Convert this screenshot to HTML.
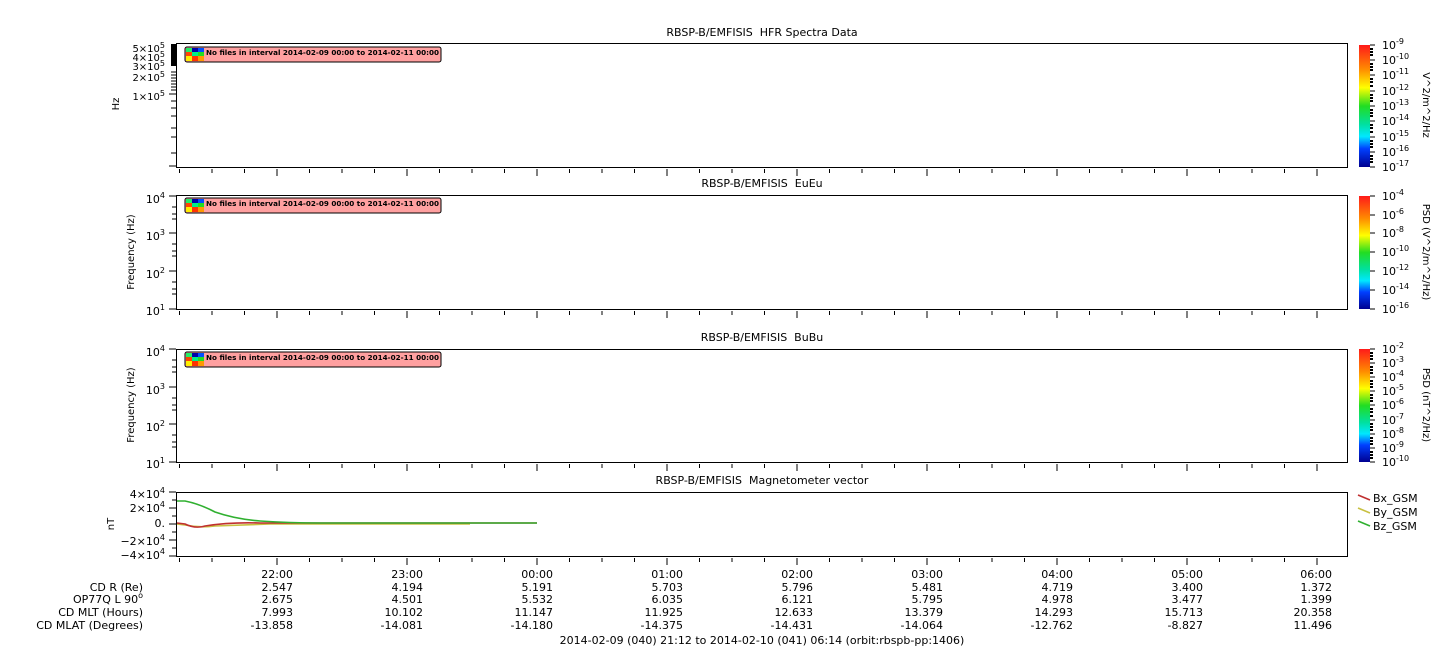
<!DOCTYPE html>
<html><head><meta charset="utf-8"><style>
html,body{margin:0;padding:0;background:#fff}
svg{display:block;font-family:"DejaVu Sans","Liberation Sans",sans-serif}
text{fill:#000;white-space:pre}
</style></head><body>
<svg width="1447" height="658" viewBox="0 0 1447 658" xmlns="http://www.w3.org/2000/svg">
<defs>
<linearGradient id="cb" x1="0" y1="0" x2="0" y2="1">
<stop offset="0" stop-color="#ff1a1a"/><stop offset="0.2" stop-color="#ff8c00"/><stop offset="0.35" stop-color="#ffff00"/><stop offset="0.5" stop-color="#22dd22"/><stop offset="0.65" stop-color="#00e0a0"/><stop offset="0.75" stop-color="#00e8ff"/><stop offset="0.85" stop-color="#0040ff"/><stop offset="1" stop-color="#000090"/>
</linearGradient>
<path id="tk" stroke="#000" fill="none" d="M179.5 2v4M212 2v4M244.5 2v4M277 2v7M309.5 2v4M342 2v4M374.5 2v4M407 2v7M439.5 2v4M472 2v4M504.5 2v4M537 2v7M569.5 2v4M602 2v4M634.5 2v4M667 2v7M699.5 2v4M732 2v4M764.5 2v4M797 2v7M829.5 2v4M862 2v4M894.5 2v4M927 2v7M959.5 2v4M992 2v4M1024.5 2v4M1057 2v7M1089.5 2v4M1122 2v4M1154.5 2v4M1187 2v7M1219.5 2v4M1252 2v4M1284.5 2v4M1317 2v7"/>
<g id="nf">
<rect x="185" y="0" width="256" height="15" rx="2" fill="#ffa0a0" stroke="#000"/>
<rect x="186" y="1" width="6" height="4" fill="#22ee66"/><rect x="192" y="1" width="6" height="4" fill="#0000aa"/><rect x="198" y="1" width="6" height="4" fill="#0050ff"/>
<rect x="186" y="5" width="6" height="4" fill="#ff4400"/><rect x="192" y="5" width="6" height="4" fill="#00ee88"/><rect x="198" y="5" width="6" height="4" fill="#22dd22"/>
<rect x="186" y="9" width="6" height="5" fill="#ffee00"/><rect x="192" y="9" width="6" height="5" fill="#ff3300"/><rect x="198" y="9" width="6" height="5" fill="#ff9900"/>
<text x="206" y="8" font-size="7" font-weight="bold" textLength="233" lengthAdjust="spacingAndGlyphs">No files in interval 2014-02-09 00:00 to 2014-02-11 00:00</text>
</g>
</defs>

<g font-size="11" text-anchor="middle">
<text x="762" y="36">RBSP-B/EMFISIS  HFR Spectra Data</text>
<text x="762" y="187">RBSP-B/EMFISIS  EuEu</text>
<text x="762" y="341">RBSP-B/EMFISIS  BuBu</text>
<text x="762" y="484">RBSP-B/EMFISIS  Magnetometer vector</text>
</g>

<g fill="none" stroke="#000">
<rect x="176.5" y="43.5" width="1171" height="124"/>
<rect x="176.5" y="195.5" width="1171" height="114"/>
<rect x="176.5" y="349.5" width="1171" height="113"/>
<rect x="176.5" y="492.5" width="1171" height="64"/>
</g>
<use href="#tk" transform="translate(0,167)"/>
<use href="#tk" transform="translate(0,309)"/>
<use href="#tk" transform="translate(0,462)"/>
<use href="#tk" transform="translate(0,556)"/>

<rect x="171" y="44" width="5" height="22" fill="#000"/>
<path stroke="#000" fill="none" d="M171 72h5M171 75h5M171 78h5M171 81h5M171 84h5M171 87h5M171 90h5M169 94h7M171 101h5M171 108h5M171 116h5M171 128h5M171 137h5M171 153h5M169 166h7"/>
<g font-size="10" text-anchor="end">
<text x="165" y="52">5×10<tspan font-size="8" dy="-4">5</tspan></text>
<text x="165" y="61">4×10<tspan font-size="8" dy="-4">5</tspan></text>
<text x="165" y="70">3×10<tspan font-size="8" dy="-4">5</tspan></text>
<text x="165" y="81">2×10<tspan font-size="8" dy="-4">5</tspan></text>
<text x="165" y="100">1×10<tspan font-size="8" dy="-4">5</tspan></text>
</g>
<text font-size="10" transform="translate(119,104) rotate(-90)" text-anchor="middle">Hz</text>
<use href="#nf" transform="translate(0,47)"/>

<path stroke="#000" fill="none" d="M169 196h7M169 233h7M169 271h7M169 309h7M172 207h4M172 214h4M172 219h4M172 244h4M172 251h4M172 256h4M172 282h4M172 289h4M172 294h4"/>
<g font-size="11" text-anchor="end">
<text x="165" y="203">10<tspan font-size="8" dy="-5">4</tspan></text>
<text x="165" y="240">10<tspan font-size="8" dy="-5">3</tspan></text>
<text x="165" y="278">10<tspan font-size="8" dy="-5">2</tspan></text>
<text x="165" y="315">10<tspan font-size="8" dy="-5">1</tspan></text>
</g>
<text font-size="10" transform="translate(134,252) rotate(-90)" text-anchor="middle">Frequency (Hz)</text>
<use href="#nf" transform="translate(0,198)"/>

<path stroke="#000" fill="none" d="M169 349h7M169 387h7M169 424h7M169 462h7M172 360h4M172 367h4M172 372h4M172 398h4M172 405h4M172 410h4M172 435h4M172 442h4M172 447h4"/>
<g font-size="11" text-anchor="end">
<text x="165" y="356">10<tspan font-size="8" dy="-5">4</tspan></text>
<text x="165" y="394">10<tspan font-size="8" dy="-5">3</tspan></text>
<text x="165" y="431">10<tspan font-size="8" dy="-5">2</tspan></text>
<text x="165" y="468">10<tspan font-size="8" dy="-5">1</tspan></text>
</g>
<text font-size="10" transform="translate(134,405) rotate(-90)" text-anchor="middle">Frequency (Hz)</text>
<use href="#nf" transform="translate(0,352)"/>

<path stroke="#000" fill="none" d="M169 492h7M169 508h7M169 524h7M169 540h7M169 556h7M172 500h4M172 516h4M172 532h4M172 548h4"/>
<g font-size="11" text-anchor="end">
<text x="165" y="498">4×10<tspan font-size="8" dy="-5">4</tspan></text>
<text x="165" y="512">2×10<tspan font-size="8" dy="-5">4</tspan></text>
<text x="165" y="527">0.</text>
<text x="165" y="545">−2×10<tspan font-size="8" dy="-5">4</tspan></text>
<text x="165" y="559">−4×10<tspan font-size="8" dy="-5">4</tspan></text>
</g>
<text font-size="10" transform="translate(114,524) rotate(-90)" text-anchor="middle">nT</text>
<g fill="none" stroke-width="1.6">
<path stroke="#c8c040" d="M177 524 L185 525 Q200 528 215 526 Q240 525 270 524 L470 524"/>
<path stroke="#c03030" d="M177 523 L185 524 Q195 529 205 526 Q230 522 260 523 L537 523"/>
<path stroke="#30b030" d="M177 501 L185 501 Q200 504 215 512 Q235 519 260 521 Q290 523 320 523 L537 523"/>
</g>

<rect x="1359" y="45" width="11" height="122" fill="url(#cb)"/>
<rect x="1359" y="196" width="11" height="113" fill="url(#cb)"/>
<rect x="1359" y="349" width="11" height="113" fill="url(#cb)"/>
<path stroke="#000" fill="none" d="M1370 45h5M1370 60h5M1370 75h5M1370 91h5M1370 106h5M1370 121h5M1370 137h5M1370 152h5M1370 167h5"/>
<path stroke="#000" stroke-width="2" fill="none" d="M1370 49h3M1370 52h3M1370 55h3M1370 64h3M1370 67h3M1370 70h3M1370 79h3M1370 82h3M1370 86h3M1370 95h3M1370 98h3M1370 101h3M1370 110h3M1370 113h3M1370 116h3M1370 125h3M1370 128h3M1370 132h3M1370 141h3M1370 144h3M1370 147h3M1370 156h3M1370 159h3M1370 162h3"/>
<path stroke="#000" fill="none" d="M1370 196h5M1370 215h5M1370 233h5M1370 252h5M1370 271h5M1370 290h5M1370 309h5"/>
<path stroke="#000" fill="none" d="M1370 349h5M1370 363h5M1370 377h5M1370 391h5M1370 405h5M1370 420h5M1370 434h5M1370 448h5M1370 462h5"/>
<path stroke="#000" stroke-width="2" fill="none" d="M1370 353h3M1370 356h3M1370 359h3M1370 367h3M1370 370h3M1370 373h3M1370 381h3M1370 384h3M1370 387h3M1370 395h3M1370 398h3M1370 401h3M1370 409h3M1370 412h3M1370 416h3M1370 424h3M1370 427h3M1370 430h3M1370 438h3M1370 441h3M1370 444h3M1370 452h3M1370 455h3M1370 458h3"/>
<g font-size="11">
<text x="1382" y="49">10<tspan font-size="8" dy="-5">-9</tspan></text>
<text x="1382" y="64">10<tspan font-size="8" dy="-5">-10</tspan></text>
<text x="1382" y="79">10<tspan font-size="8" dy="-5">-11</tspan></text>
<text x="1382" y="95">10<tspan font-size="8" dy="-5">-12</tspan></text>
<text x="1382" y="110">10<tspan font-size="8" dy="-5">-13</tspan></text>
<text x="1382" y="125">10<tspan font-size="8" dy="-5">-14</tspan></text>
<text x="1382" y="141">10<tspan font-size="8" dy="-5">-15</tspan></text>
<text x="1382" y="156">10<tspan font-size="8" dy="-5">-16</tspan></text>
<text x="1382" y="171">10<tspan font-size="8" dy="-5">-17</tspan></text>
<text x="1382" y="200">10<tspan font-size="8" dy="-5">-4</tspan></text>
<text x="1382" y="219">10<tspan font-size="8" dy="-5">-6</tspan></text>
<text x="1382" y="237">10<tspan font-size="8" dy="-5">-8</tspan></text>
<text x="1382" y="256">10<tspan font-size="8" dy="-5">-10</tspan></text>
<text x="1382" y="275">10<tspan font-size="8" dy="-5">-12</tspan></text>
<text x="1382" y="294">10<tspan font-size="8" dy="-5">-14</tspan></text>
<text x="1382" y="313">10<tspan font-size="8" dy="-5">-16</tspan></text>
<text x="1382" y="353">10<tspan font-size="8" dy="-5">-2</tspan></text>
<text x="1382" y="367">10<tspan font-size="8" dy="-5">-3</tspan></text>
<text x="1382" y="381">10<tspan font-size="8" dy="-5">-4</tspan></text>
<text x="1382" y="395">10<tspan font-size="8" dy="-5">-5</tspan></text>
<text x="1382" y="409">10<tspan font-size="8" dy="-5">-6</tspan></text>
<text x="1382" y="424">10<tspan font-size="8" dy="-5">-7</tspan></text>
<text x="1382" y="438">10<tspan font-size="8" dy="-5">-8</tspan></text>
<text x="1382" y="452">10<tspan font-size="8" dy="-5">-9</tspan></text>
<text x="1382" y="466">10<tspan font-size="8" dy="-5">-10</tspan></text>
</g>
<g font-size="10" text-anchor="middle">
<text transform="translate(1423,105) rotate(90)">V^2/m^2/Hz</text>
<text transform="translate(1423,252) rotate(90)">PSD (V^2/m^2/Hz)</text>
<text transform="translate(1423,405) rotate(90)">PSD (nT^2/Hz)</text>
</g>

<g stroke-width="1.6">
<path stroke="#c03030" d="M1358 495l12 5"/>
<path stroke="#c8c040" d="M1358 508l12 5"/>
<path stroke="#30b030" d="M1358 521l12 5"/>
</g>
<g font-size="11">
<text x="1373" y="502">Bx_GSM</text>
<text x="1373" y="516">By_GSM</text>
<text x="1373" y="530">Bz_GSM</text>
</g>

<g font-size="11" text-anchor="end">
<text x="143" y="591">CD R (Re)</text>
<text x="143" y="603">OP77Q L 90<tspan font-size="8" dy="-5">o</tspan></text>
<text x="143" y="616">CD MLT (Hours)</text>
<text x="143" y="629">CD MLAT (Degrees)</text>
</g>
<g font-size="11" text-anchor="end">
<text x="293" y="578">22:00</text><text x="293" y="591">2.547</text><text x="293" y="603">2.675</text><text x="293" y="616">7.993</text><text x="293" y="629">-13.858</text>
<text x="423" y="578">23:00</text><text x="423" y="591">4.194</text><text x="423" y="603">4.501</text><text x="423" y="616">10.102</text><text x="423" y="629">-14.081</text>
<text x="553" y="578">00:00</text><text x="553" y="591">5.191</text><text x="553" y="603">5.532</text><text x="553" y="616">11.147</text><text x="553" y="629">-14.180</text>
<text x="683" y="578">01:00</text><text x="683" y="591">5.703</text><text x="683" y="603">6.035</text><text x="683" y="616">11.925</text><text x="683" y="629">-14.375</text>
<text x="813" y="578">02:00</text><text x="813" y="591">5.796</text><text x="813" y="603">6.121</text><text x="813" y="616">12.633</text><text x="813" y="629">-14.431</text>
<text x="943" y="578">03:00</text><text x="943" y="591">5.481</text><text x="943" y="603">5.795</text><text x="943" y="616">13.379</text><text x="943" y="629">-14.064</text>
<text x="1073" y="578">04:00</text><text x="1073" y="591">4.719</text><text x="1073" y="603">4.978</text><text x="1073" y="616">14.293</text><text x="1073" y="629">-12.762</text>
<text x="1203" y="578">05:00</text><text x="1203" y="591">3.400</text><text x="1203" y="603">3.477</text><text x="1203" y="616">15.713</text><text x="1203" y="629">-8.827</text>
<text x="1332" y="578">06:00</text><text x="1332" y="591">1.372</text><text x="1332" y="603">1.399</text><text x="1332" y="616">20.358</text><text x="1332" y="629">11.496</text>
</g>
<text x="762" y="644" font-size="11" text-anchor="middle">2014-02-09 (040) 21:12 to 2014-02-10 (041) 06:14 (orbit:rbspb-pp:1406)</text>
</svg>
</body></html>
